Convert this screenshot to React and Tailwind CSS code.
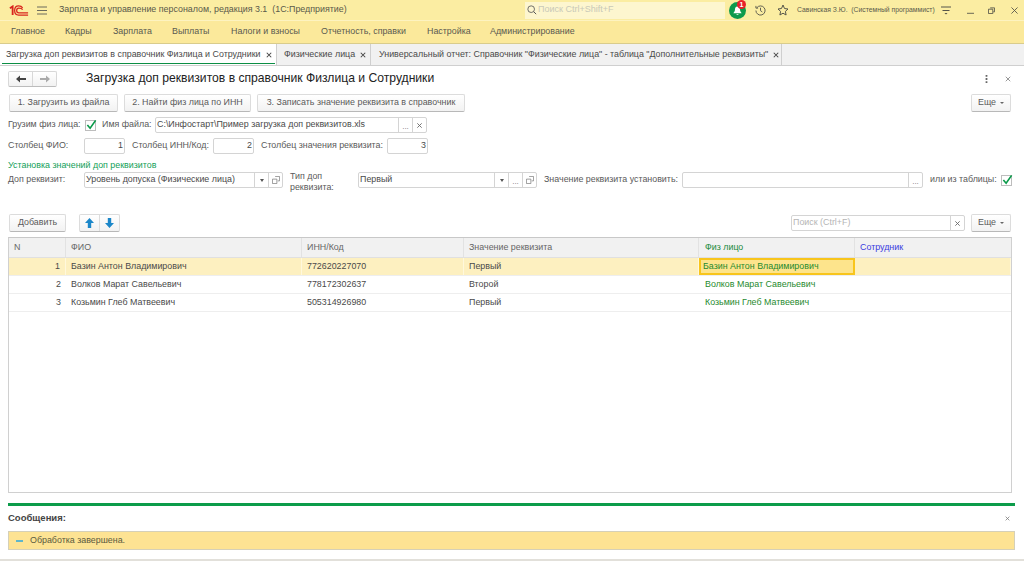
import React from "react";

const Btn = ({ children, className = "" }) => (
  <div className={"h-[18px] flex items-center justify-center bg-gradient-to-b from-white to-[#f2f2f2] border border-[#dcdcdc] border-b-[#b8b8b8] rounded-[2px] text-[8.9px] text-[#5a5a5a] " + className}>
    {children}
  </div>
);

const More = () => (
  <Btn className="w-[40px] gap-[4px]">
    <span>Еще</span>
    <span className="w-0 h-0 border-x-[2px] border-x-transparent border-t-[2px] border-t-[#666]" />
  </Btn>
);

const Check = ({ className = "" }) => (
  <div className={"w-[11px] h-[11px] border border-[#bdbdbd] bg-white relative shrink-0 " + className}>
    <svg viewBox="0 0 12 12" className="absolute left-[0px] top-[-2px] w-[11px] h-[11px]">
      <path d="M1.5 6.5 L4.5 10 L10.5 1.5" fill="none" stroke="#0a9a4a" strokeWidth="1.8" />
    </svg>
  </div>
);

const Field = ({ value = "", width, buttons = [], placeholder, right }) => (
  <div style={{ width }} className={"h-[16px] shrink-0 flex border border-[#d4d4d4] rounded-[2px] bg-white text-[8.9px] text-[#4a4a4a] overflow-hidden"}>
    <div className={"flex-1 min-w-0 flex items-center px-[1px] whitespace-nowrap " + (right ? "justify-end" : "") + (placeholder ? " text-[#b5b5b5]" : "")}>
      {value || placeholder}
    </div>
    {buttons.map((b, i) => (
      <div key={i} className="w-[14px] border-l border-[#d4d4d4] flex items-center justify-center text-[#777] shrink-0">
        {b === "more" && <span className="text-[8px] leading-none mt-[3px]">...</span>}
        {b === "drop" && <span className="w-0 h-0 border-x-[2px] border-x-transparent border-t-[3px] border-t-[#555]" />}
        {b === "x" && <svg viewBox="0 0 8 8" className="w-[7px] h-[7px]"><path d="M1.5 1.5L6.5 6.5M6.5 1.5L1.5 6.5" stroke="#666" strokeWidth="1" /></svg>}
        {b === "open" && (
          <svg viewBox="0 0 9 9" className="w-[8px] h-[8px]"><path d="M3.5 .5H8.5V5.5H6.5M.5 3.5H5.5V8.5H.5Z" fill="none" stroke="#777" strokeWidth=".8" /></svg>
        )}
      </div>
    ))}
  </div>
);

const Label = ({ children, className = "" }) => (
  <span className={"text-[8.9px] text-[#5a5a5a] whitespace-nowrap shrink-0 " + className}>{children}</span>
);

const TabClose = () => (
  <svg viewBox="0 0 8 8" className="w-[6px] h-[6px] shrink-0"><path d="M1 1L7 7M7 1L1 7" stroke="#444" strokeWidth="1.4" /></svg>
);

const Tab = ({ children, className = "", active }) => (
  <div className={"h-full flex items-center border-r border-[#cfcfcf] relative whitespace-nowrap text-[8.9px] text-[#4a4a4a] shrink-0 " + (active ? "bg-white " : "") + className}>
    <span>{children}</span>
    <TabClose />
    {active && <div className="absolute left-[2px] right-[1px] bottom-[1px] h-[1px] bg-[#0c8f45]" />}
  </div>
);

const cols = ["w-[57px]", "w-[236px]", "w-[162px]", "w-[235px]", "w-[156px]", "w-[156px]"];

const rows = [
  ["1", "Базин Антон Владимирович", "772620227070", "Первый", "Базин Антон Владимирович", ""],
  ["2", "Волков Марат Савельевич", "778172302637", "Второй", "Волков Марат Савельевич", ""],
  ["3", "Козьмин Глеб Матвеевич", "505314926980", "Первый", "Козьмин Глеб Матвеевич", ""],
];

const menu = [
  ["Главное", "w-[54px]"],
  ["Кадры", "w-[48px]"],
  ["Зарплата", "w-[59px]"],
  ["Выплаты", "w-[59px]"],
  ["Налоги и взносы", "w-[90px]"],
  ["Отчетность, справки", "w-[106px]"],
  ["Настройка", "w-[63px]"],
  ["Администрирование", "w-[110px]"],
];

export default function App() {
  return (
    <div className="w-[1024px] h-[561px] overflow-hidden flex flex-col bg-white font-['Liberation_Sans',Arial,sans-serif]">
      {/* Title bar */}
      <div className="h-[20px] shrink-0 bg-[#fbeda2] flex items-center relative text-[#5a5a4a]">
        <svg viewBox="0 0 22 12" className="ml-[9px] w-[20px] h-[11px] shrink-0">
          <path d="M1 3.5L4 1.5V11" fill="none" stroke="#d9241c" strokeWidth="2" />
          <path d="M15 3C14 1.6 12.4 1 10.6 1 8 1 6.2 3 6.2 6s1.8 5 4.4 5H21" fill="none" stroke="#d9241c" strokeWidth="1.4" />
          <path d="M15 5C14.4 4 13.4 3.4 10.8 3.4 9.2 3.4 8.4 4.6 8.4 6s.8 2.6 2.4 2.6H21" fill="none" stroke="#d9241c" strokeWidth="1.4" />
        </svg>
        <svg viewBox="0 0 10 9" className="ml-[8px] w-[10px] h-[9px] shrink-0">
          <path d="M0 1H10M0 4.5H10M0 8H10" stroke="#6b6b5c" strokeWidth="1" />
        </svg>
        <span className="ml-[12px] text-[8.9px] whitespace-pre w-[466px] shrink-0">Зарплата и управление персоналом, редакция 3.1  (1С:Предприятие)</span>
        <div className="w-[200px] h-[17px] bg-[#fdf6cf] flex items-center shrink-0 pl-[2px] gap-[1px]">
          <svg viewBox="0 0 12 12" className="w-[10px] h-[10px] shrink-0">
            <circle cx="5" cy="5" r="4" fill="none" stroke="#555" strokeWidth="1" />
            <path d="M8 8L11 11" stroke="#555" strokeWidth="1.2" />
          </svg>
          <span className="text-[9px] text-[#c9c9b8]">Поиск Ctrl+Shift+F</span>
        </div>
        <div className="ml-[4px] w-[17px] h-[17px] rounded-full bg-[#0e9a4c] relative shrink-0 flex items-center justify-center">
          <svg viewBox="0 0 12 12" className="w-[11px] h-[11px]">
            <path d="M6 1.5C3.8 1.5 3.2 3.4 3.2 5.2 3.2 7 2 8.2 1.5 9H10.5C10 8.2 8.8 7 8.8 5.2 8.8 3.4 8.2 1.5 6 1.5ZM5 10H7V11H5Z" fill="#fff" />
          </svg>
          <div className="absolute -top-[2px] left-[8px] w-[9px] h-[9px] rounded-full bg-[#e8202a] text-white text-[7px] font-bold flex items-center justify-center leading-none">1</div>
        </div>
        <svg viewBox="0 0 12 12" className="ml-[9px] w-[11px] h-[11px] shrink-0">
          <path d="M2 3A5 5 0 1 1 1 6M1 1V3.4H3.4M6 3V6.2L8 7.6" fill="none" stroke="#55554a" strokeWidth="1" />
        </svg>
        <svg viewBox="0 0 12 12" className="ml-[11px] w-[12px] h-[12px] shrink-0">
          <path d="M6 1L7.5 4.5L11 5L8.4 7.4L9.1 11L6 9.2L2.9 11L3.6 7.4L1 5L4.5 4.5Z" fill="none" stroke="#55554a" strokeWidth="1" />
        </svg>
        <span className="ml-[8px] text-[6.8px] whitespace-pre w-[142px] shrink-0">Савинская З.Ю.  (Системный программист)</span>
        <svg viewBox="0 0 10 9" className="ml-[2px] w-[10px] h-[9px] shrink-0">
          <path d="M0 1H10M1.5 4.5H8.5" stroke="#55554a" strokeWidth="1" />
          <path d="M3.5 7L5 8.6L6.5 7Z" fill="#55554a" />
        </svg>
        <svg viewBox="0 0 8 8" className="ml-[16px] w-[7px] h-[7px] shrink-0"><path d="M0 7.2H8" stroke="#55554a" strokeWidth="1" /></svg>
        <svg viewBox="0 0 8 8" className="ml-[14px] w-[7px] h-[7px] shrink-0"><path d="M2.5 1H7.5V5.5H6M.5 2.5H5.5V7.5H.5Z" fill="none" stroke="#55554a" strokeWidth="1" /></svg>
        <svg viewBox="0 0 8 8" className="ml-[16px] w-[7px] h-[7px] shrink-0"><path d="M.5 .5L7.5 7.5M7.5 .5L.5 7.5" stroke="#55554a" strokeWidth="1" /></svg>
      </div>
      {/* Menu */}
      <div className="h-[24px] shrink-0 bg-[#fbe99b] border-t border-[#fdf3c0] border-b border-b-[#d9cc8c] flex items-center pl-[11px] text-[8.9px] text-[#5a5a50]">
        {menu.map(([m, w]) => (
          <span key={m} className={w + " shrink-0 whitespace-nowrap"}>{m}</span>
        ))}
      </div>
      {/* Tabs */}
      <div className="h-[22px] shrink-0 bg-[#f1f1f1] border-b border-[#cfcfcf] flex">
        <Tab active className="w-[277px] pl-[6px] gap-[5px]">Загрузка доп реквизитов в справочник Физлица и Сотрудники</Tab>
        <Tab className="w-[94px] pl-[7px] gap-[5px]">Физические лица</Tab>
        <Tab className="w-[411px] pl-[8px] gap-[5px]">Универсальный отчет: Справочник "Физические лица" - таблица "Дополнительные реквизиты"</Tab>
      </div>
      {/* Heading */}
      <div className="h-[25px] shrink-0 flex items-center pl-[8px] pr-[13px]">
        <div className="w-[49px] h-[16px] flex border border-[#d8d8d8] border-b-[#bcbcbc] rounded-[2px] bg-gradient-to-b from-white to-[#f2f2f2] shrink-0">
          <div className="w-[24px] flex items-center justify-center border-r border-[#d8d8d8]">
            <svg viewBox="0 0 10 8" className="w-[10px] h-[8px]"><path d="M10 3H4V0.5L0 4L4 7.5V5H10Z" fill="#444" /></svg>
          </div>
          <div className="flex-1 flex items-center justify-center">
            <svg viewBox="0 0 10 8" className="w-[10px] h-[8px]"><path d="M0 3H6V0.5L10 4L6 7.5V5H0Z" fill="#aaa" /></svg>
          </div>
        </div>
        <span className="ml-[29px] text-[12.15px] text-[#222] whitespace-nowrap">Загрузка доп реквизитов в справочник Физлица и Сотрудники</span>
        <div className="flex-1" />
        <svg viewBox="0 0 3 9" className="w-[3px] h-[8px] shrink-0"><path d="M.5 0H2.5V2H.5ZM.5 3.5H2.5V5.5H.5ZM.5 7H2.5V9H.5Z" fill="#666" /></svg>
        <svg viewBox="0 0 8 8" className="ml-[17px] w-[6px] h-[6px] shrink-0"><path d="M1 1L7 7M7 1L1 7" stroke="#777" strokeWidth="1" /></svg>
      </div>
      {/* Action buttons */}
      <div className="shrink-0 flex pl-[9px] pr-[13px] mt-[3px]">
        <Btn className="w-[109px]">1. Загрузить из файла</Btn>
        <Btn className="w-[127px] ml-[6px]">2. Найти физ лица по ИНН</Btn>
        <Btn className="w-[208px] ml-[6px]">3. Записать значение реквизита в справочник</Btn>
        <div className="flex-1" />
        <More />
      </div>
      {/* Row 2 */}
      <div className="mt-[5px] h-[16px] shrink-0 flex items-center pl-[8px]">
        <Label className="w-[77px]">Грузим физ лица:</Label>
        <Check />
        <Label className="ml-[6px] w-[53px]">Имя файла:</Label>
        <Field width="272px" value="C:\Инфостарт\Пример загрузка доп реквизитов.xls" buttons={["more", "x"]} />
      </div>
      {/* Row 3 */}
      <div className="mt-[5px] h-[16px] shrink-0 flex items-center pl-[8px]">
        <Label className="w-[76px]">Столбец ФИО:</Label>
        <Field width="41px" value="1" right />
        <Label className="ml-[7px] w-[81px]">Столбец ИНН/Код:</Label>
        <Field width="41px" value="2" right />
        <Label className="ml-[7px] w-[126px]">Столбец значения реквизита:</Label>
        <Field width="41px" value="3" right />
      </div>
      {/* Section */}
      <div className="mt-[5px] h-[13px] shrink-0 pl-[8px] flex items-center text-[8.9px] text-[#12a058]">Установка значений доп реквизитов</div>
      {/* Row 4 */}
      <div className="h-[16px] shrink-0 flex items-center pl-[8px]">
        <Label className="w-[76px]">Доп реквизит:</Label>
        <Field width="199px" value="Уровень допуска (Физические лица)" buttons={["drop", "open"]} />
        <span className="ml-[7px] w-[68px] shrink-0 text-[8.9px] leading-[11px] text-[#5a5a5a] mt-[3px]">Тип доп<br />реквизита:</span>
        <Field width="179px" value="Первый" buttons={["drop", "more", "open"]} />
        <Label className="ml-[7px] w-[138px]">Значение реквизита установить:</Label>
        <Field width="241px" buttons={["more"]} />
        <Label className="ml-[7px] w-[71px]">или из таблицы:</Label>
        <Check />
      </div>
      {/* Toolbar */}
      <div className="mt-[26px] shrink-0 flex items-center pl-[9px] pr-[13px]">
        <Btn className="w-[57px]">Добавить</Btn>
        <div className="ml-[13px] w-[41px] h-[18px] flex border border-[#dcdcdc] border-b-[#b8b8b8] rounded-[2px] bg-gradient-to-b from-white to-[#f2f2f2]">
          <div className="w-[20px] flex items-center justify-center border-r border-[#dcdcdc]">
            <svg viewBox="0 0 9 10" className="w-[9px] h-[10px]"><path d="M4.5 0L9 5H6.2V10H2.8V5H0Z" fill="#1c87c9" /></svg>
          </div>
          <div className="flex-1 flex items-center justify-center">
            <svg viewBox="0 0 9 10" className="w-[9px] h-[10px]"><path d="M4.5 10L9 5H6.2V0H2.8V5H0Z" fill="#1c87c9" /></svg>
          </div>
        </div>
        <div className="flex-1" />
        <Field width="174px" placeholder="Поиск (Ctrl+F)" buttons={["x"]} />
        <div className="w-[6px] shrink-0" />
        <More />
      </div>
      {/* Table */}
      <div className="mt-[5px] mx-[8px] w-[1004px] flex-1 min-h-0 border border-[#d0d0d0] border-t-[#c8c8c8] text-[8.9px] text-[#4a4a4a] overflow-hidden">
        <div className="h-[20px] flex bg-[#f1f1f1] border-b border-[#e0e0e0]">
          {["N", "ФИО", "ИНН/Код", "Значение реквизита", "Физ лицо", "Сотрудник"].map((h, i) => (
            <div
              key={h}
              className={cols[i] + " shrink-0 flex items-center border-r border-[#e2e2e2] " + (i === 4 ? "pl-[6px] text-[#1a8a3a]" : i === 5 ? "pl-[5px] text-[#3b3be0] border-r-0" : "pl-[5px] text-[#666]")}
            >
              {h}
            </div>
          ))}
        </div>
        {rows.map((r, ri) => (
          <div key={ri} className={"h-[18px] flex border-b border-[#eeeeee] " + (ri === 0 ? "bg-[#fdf0c0]" : "")}>
            {r.map((c, i) => (
              <div
                key={i}
                className={
                  cols[i] +
                  " shrink-0 flex items-center whitespace-nowrap " +
                  (i === 0 ? "justify-end pr-[5px] " : "") +
                  (i !== 0 && i !== 4 ? "pl-[5px] " : "") +
                  (i === 4 && ri !== 0 ? "pl-[6px] " : "") +
                  (i === 4 ? "text-[#1f8a2e] " : "") +
                  (ri === 0 && i === 4 ? "bg-[#fde48c] border-2 border-[#f8c51c] pl-[2px] " : ri === 0 ? "border-r border-[#fff8dc] " : "")
                }
              >
                {c}
              </div>
            ))}
          </div>
        ))}
      </div>
      {/* Messages */}
      <div className="mt-[10px] mx-[8px] w-[1007px] h-[3px] shrink-0 bg-[#0c9c4a]" />
      <div className="h-[25px] shrink-0 mx-[8px] w-[1007px] flex items-center justify-between">
        <span className="text-[9.5px] font-bold text-[#444]">Сообщения:</span>
        <svg viewBox="0 0 8 8" className="w-[5px] h-[5px] mr-[5px]"><path d="M1 1L7 7M7 1L1 7" stroke="#777" strokeWidth="1.2" /></svg>
      </div>
      <div className="h-[19px] shrink-0 mx-[8px] w-[1007px] bg-[#fde393] border border-[#d5d0b8] flex items-center">
        <div className="ml-[7px] w-[7px] h-[2px] bg-[#5fb6c9]" />
        <span className="ml-[7px] text-[8.9px] text-[#5a5a40]">Обработка завершена.</span>
      </div>
      <div className="mt-[9px] h-[2px] shrink-0 bg-[#e2e0da]" />
    </div>
  );
}
